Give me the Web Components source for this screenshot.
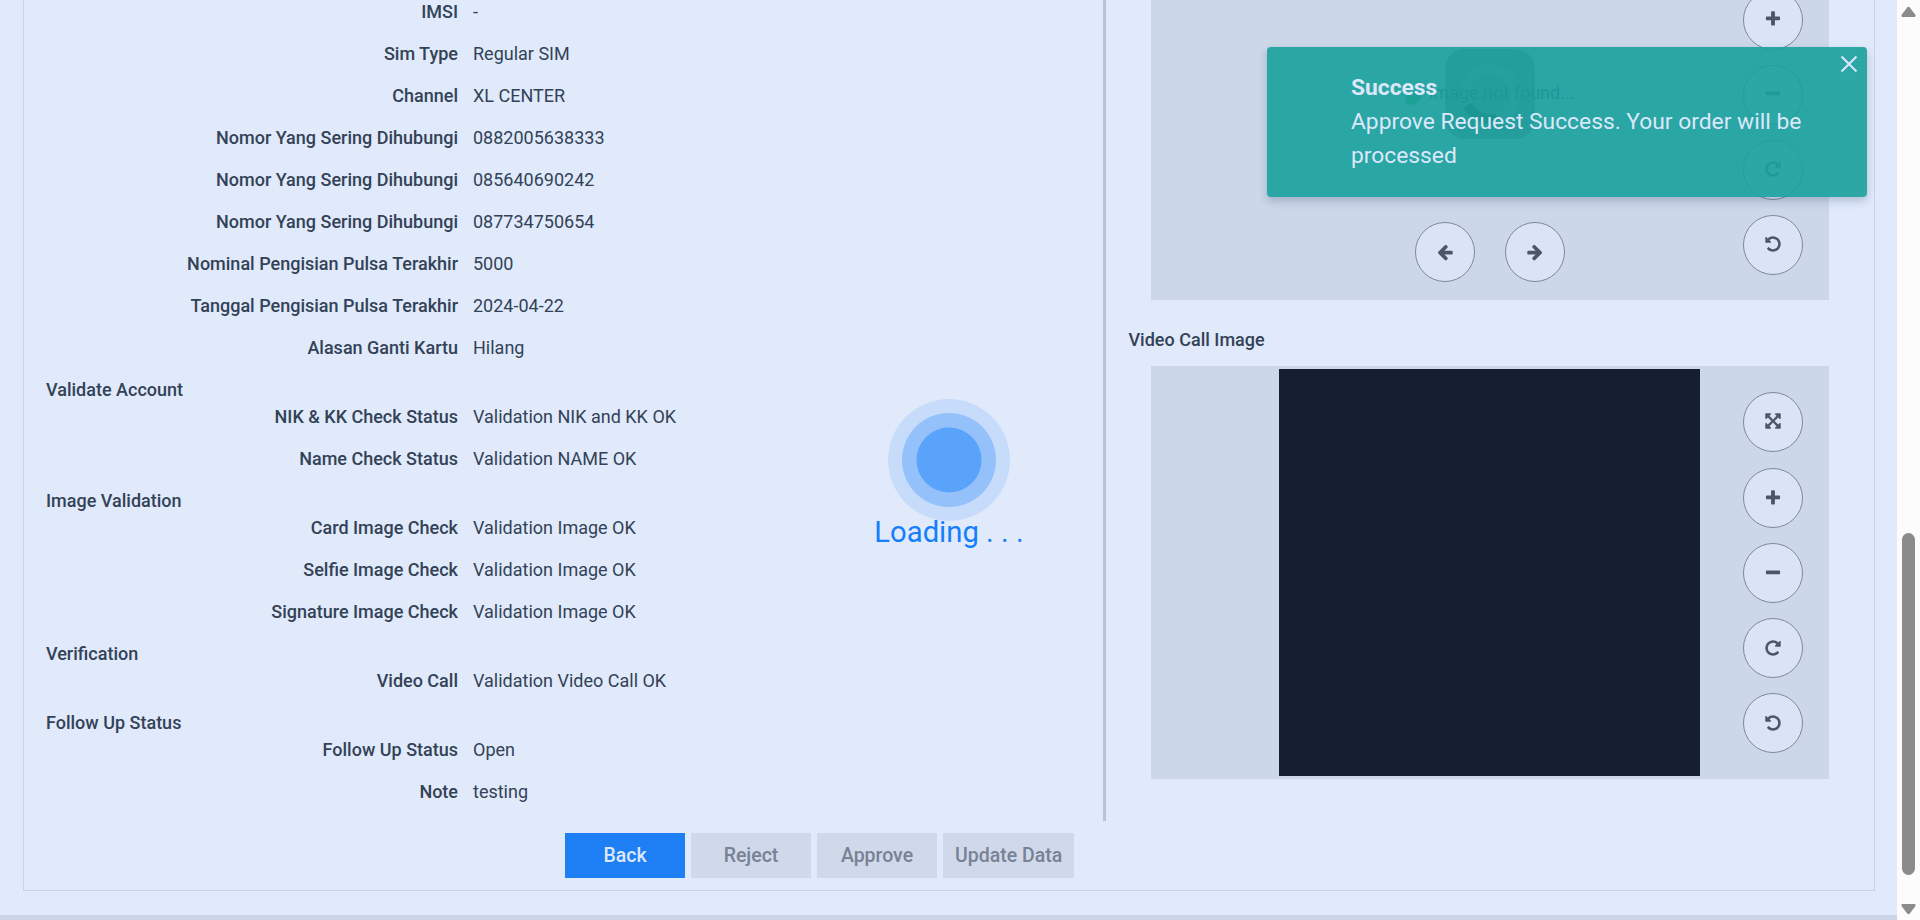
<!DOCTYPE html>
<html lang="id">
<head>
<meta charset="utf-8">
<title>Approve Request</title>
<style>
html,body{margin:0;height:920px;overflow:hidden}
body{font-family:Roboto,"Liberation Sans",sans-serif;font-size:18px;line-height:27px;color:#334257;background:#e0eafb}
</style>
</head>
<body>
<app-page></app-page>
<script>
const define=(name,css,html)=>customElements.define(name,class extends HTMLElement{
  constructor(){
    super();
    const r=this.attachShadow({mode:'open'});
    r.innerHTML='<style>*{box-sizing:border-box}'+css+'</style>'+(typeof html==='function'?html(this):html);
  }
});

const ICONS={
  expand:'M1411 541l-355 355 355 355 144-144q29-31 70-14 39 17 39 59v448q0 26-19 45t-45 19h-448q-42 0-59-40-17-39 14-69l144-144-355-355-355 355 144 144q31 30 14 69-17 40-59 40h-448q-26 0-45-19t-19-45v-448q0-42 40-59 39-17 69 14l144 144 355-355-355-355-144 144q-19 19-45 19-12 0-24-5-40-17-40-59v-448q0-26 19-45t45-19h448q42 0 59 40 17 39-14 69l-144 144 355 355 355-355-144-144q-31-30-14-69 17-40 59-40h448q26 0 45 19t19 45v448q0 42-39 59-13 5-25 5-26 0-45-19z',
  plus:'M1600 736v192q0 40-28 68t-68 28h-416v416q0 40-28 68t-68 28h-192q-40 0-68-28t-28-68v-416h-416q-40 0-68-28t-28-68v-192q0-40 28-68t68-28h416v-416q0-40 28-68t68-28h192q40 0 68 28t28 68v416h416q40 0 68 28t28 68z',
  minus:'M1600 736v192q0 40-28 68t-68 28h-1216q-40 0-68-28t-28-68v-192q0-40 28-68t68-28h1216q40 0 68 28t28 68z',
  left:'M1664 896v128q0 53-32.500 90.500t-84.500 37.500h-704l293 294q38 36 38 90t-38 90l-75 76q-37 37-90 37-52 0-91-37l-651-652q-37-37-37-90 0-52 37-91l651-650q38-38 91-38 52 0 90 38l75 74q38 38 38 91t-38 91l-293 293h704q52 0 84.500 37.500t32.500 90.500z',
  redo:'M1664 256v448q0 26-19 45t-45 19h-448q-42 0-59-40-17-39 14-69l138-138q-148-137-349-137-104 0-198.500 40.500t-163.500 109.500-109.500 163.500-40.500 198.500 40.500 198.500 109.500 163.500 163.500 109.500 198.500 40.500q119 0 225-52t179-147q7-10 23-12 15 0 25 9l137 138q9 8 9.500 20.500t-7.500 22.500q-109 132-264 204.500t-327 72.500q-156 0-298-61t-245-164-164-245-61-298 61-298 164-245 245-164 298-61q147 0 284.500 55.500t244.500 156.500l130-129q29-31 70-14 39 17 39 59z'
};
const MIRRORED={right:'left',undo:'redo'};
const icon=n=>'<svg width="18" height="18" viewBox="0 0 1792 1792"><path '+(MIRRORED[n]?'transform="translate(1792 0) scale(-1 1)" ':'')+'d="'+ICONS[MIRRORED[n]||n]+'"/></svg>';

define('round-button',`:host{display:block;width:60px;height:60px;flex:none}
button{width:60px;height:60px;border-radius:50%;border:1px solid #7e899c;background:#dae4f5;padding:0;margin:0;display:flex;align-items:center;justify-content:center;padding-bottom:var(--lift,1px)}
:host([icon=expand]) button{padding-bottom:2px}
svg{fill:#4c566a;display:block}`,
 el=>'<button>'+icon(el.getAttribute('icon'))+'</button>');

define('detail-row',`:host{display:flex;height:27px;margin-bottom:15px;gap:15px}
.l{width:434px;text-align:right;font-weight:500;white-space:nowrap}.v{white-space:nowrap}`,
 '<div class="l"><slot name="label"></slot></div><div class="v"><slot></slot></div>');

define('section-title',`:host{display:block;height:27px;font-weight:500;padding-left:22px}`,'<slot></slot>');

define('image-viewer',`:host{display:flex;height:413px;width:678px;background:#ccd7e8;position:relative;padding:3px 0 3px 128px}
.pic{width:421px;height:407px;background:#161f2f}
.tools{position:absolute;right:26px;top:26px;display:flex;flex-direction:column;gap:15px}
:host([missing]) .tools{top:27px;--lift:3px}
.tools round-button:first-child{margin-bottom:1px}
.nav{position:absolute;left:264px;bottom:18px;display:flex;gap:30px}
.alt{position:absolute;z-index:1;left:254px;top:192px;display:flex;align-items:center;color:#334257;white-space:nowrap}`,
 el=>(el.hasAttribute('missing')
  ?`<div class="alt"><svg width="24" height="24" viewBox="0 0 24 24"><path d="M.5.5h17l6 6v17H.5z" fill="#bccbe3" stroke="#a3b0c6"/><path d="M1 23V17l8-8 8 8-6 6z" fill="#36a852"/><path d="M11 24 24 12v4l-9 8z" fill="#dfe9fa"/></svg><span>image not found...</span></div><div class="nav"><round-button icon="left"></round-button><round-button icon="right"></round-button></div>`
  :'<div class="pic"></div>')
  +'<div class="tools">'+['expand','plus','minus','redo','undo'].map(i=>'<round-button icon="'+i+'"></round-button>').join('')+'</div>');

define('action-button',`:host{display:block}
button{font:500 19.500px/30px Roboto,sans-serif;height:45px;min-width:120px;padding:0 12px;border:0;background:#d0d9ea;color:#778294;display:block;white-space:nowrap}
:host([primary]) button{background:#1e7ff5;color:#dce8fb}`,'<button><slot></slot></button>');

define('loading-indicator',`:host{display:flex;flex-direction:column;align-items:center;color:#157efb;font-size:29.250px;line-height:45px;white-space:nowrap}
svg{display:block}span{margin-top:-11px}`,
 '<svg width="122" height="122"><g fill="#1e86fb"><circle cx="61" cy="61" r="61" fill-opacity=".13"/><circle cx="61" cy="61" r="47" fill-opacity=".3"/><circle cx="61" cy="61" r="32.500" fill-opacity=".5"/></g></svg><span><slot></slot></span>');

define('busy-box',`:host{display:block;width:90px;height:90px}svg{display:block}`,
 '<svg width="90" height="90"><rect width="90" height="90" rx="20" fill="#000" fill-opacity=".36"/><circle cx="45" cy="45" r="25" fill="none" stroke="#fff" stroke-opacity=".16" stroke-width="10"/><path d="M22.500 56A25 25 0 0 0 52 69" fill="none" stroke="#000" stroke-opacity=".7" stroke-width="10"/></svg>');

define('toast-message',`:host{display:flex;width:600px;height:150px;border-radius:4px;background:rgba(25,161,157,.91);box-shadow:0 4px 9px rgba(30,50,90,.24);color:#dce8fa;font-size:22.800px;line-height:34px;padding:24px 60px 0 84px;position:relative}
b{display:block;font-weight:700}
svg{position:absolute;right:9px;top:8px}`,
 '<div><b><slot name="title"></slot></b><slot></slot></div><svg width="18" height="18"><path d="M1.500 1.500 16.500 16.500M16.500 1.500 1.500 16.500" stroke="#dce8fa" stroke-width="2" fill="none"/></svg>');

define('scroll-rail',`:host{display:flex;flex-direction:column;align-items:center;width:23px;height:920px;background:#fcfcfc;flex:none}
svg{fill:#8b8b8b;display:block}.thumb{width:13px;height:342px;flex:none;border-radius:7px;background:#8b8b8b;margin-top:515px}
.up{margin-top:6px}.dn{margin-top:28px}`,
 '<svg class="up" width="15" height="12"><path d="M6.200 1.500Q7.500 0 8.800 1.500L14.500 9Q15 11 13.500 11H1.500Q0 11 .500 9Z"/></svg><div class="thumb"></div><svg class="dn" width="15" height="12"><path d="M6.200 10.500Q7.500 12 8.800 10.500L14.500 3Q15 1 13.500 1H1.500Q0 1 .500 3Z"/></svg>');

const row=(l,v)=>`<detail-row><span slot="label">${l}</span>${v}</detail-row>`;
define('app-page',`:host{display:flex;width:1920px;height:920px;overflow:hidden;position:relative}
main{width:1897px;height:920px;padding:0 22px 0 23px;border-bottom:5px solid #ccd5e6}
.card{height:891px;border:1px solid #c9d4e7;border-top:0;display:flex;flex-direction:column}
.cols{display:flex;height:821px}
.left{width:1082px;border-right:3px solid #b8c4d6}
.list{margin-top:-2px}
.right{padding-left:22.500px}
.right h4{margin:0;font:500 18px/27px Roboto,sans-serif}
image-viewer{margin-left:22.500px}
.first{margin-top:-113px;margin-bottom:26px}
.second{margin-top:13px}
.actions{display:flex;gap:6px;margin:12px 0 0 541px}
toast-message{position:absolute;z-index:2;left:1267px;top:47px}
busy-box{position:absolute;left:1445px;top:49px}
loading-indicator{position:absolute;left:849px;width:200px;top:399px}`,
`<main><div class="card"><div class="cols"><div class="left"><div class="list">
${row('IMSI','-')}${row('Sim Type','Regular SIM')}${row('Channel','XL CENTER')}${row('Nomor Yang Sering Dihubungi','0882005638333')}${row('Nomor Yang Sering Dihubungi','085640690242')}${row('Nomor Yang Sering Dihubungi','087734750654')}${row('Nominal Pengisian Pulsa Terakhir','5000')}${row('Tanggal Pengisian Pulsa Terakhir','2024-04-22')}${row('Alasan Ganti Kartu','Hilang')}
<section-title>Validate Account</section-title>${row('NIK &amp; KK Check Status','Validation NIK and KK OK')}${row('Name Check Status','Validation NAME OK')}
<section-title>Image Validation</section-title>${row('Card Image Check','Validation Image OK')}${row('Selfie Image Check','Validation Image OK')}${row('Signature Image Check','Validation Image OK')}
<section-title>Verification</section-title>${row('Video Call','Validation Video Call OK')}
<section-title>Follow Up Status</section-title>${row('Follow Up Status','Open')}${row('Note','testing')}
</div></div><div class="right"><image-viewer class="first" missing></image-viewer><h4>Video Call Image</h4><image-viewer class="second"></image-viewer></div></div>
<div class="actions"><action-button primary>Back</action-button><action-button>Reject</action-button><action-button>Approve</action-button><action-button>Update Data</action-button></div>
</div></main><scroll-rail></scroll-rail>
<busy-box></busy-box><loading-indicator>Loading . . .</loading-indicator>
<toast-message><span slot="title">Success</span>Approve Request Success. Your order will be processed</toast-message>`);
</script>
</body>
</html>
